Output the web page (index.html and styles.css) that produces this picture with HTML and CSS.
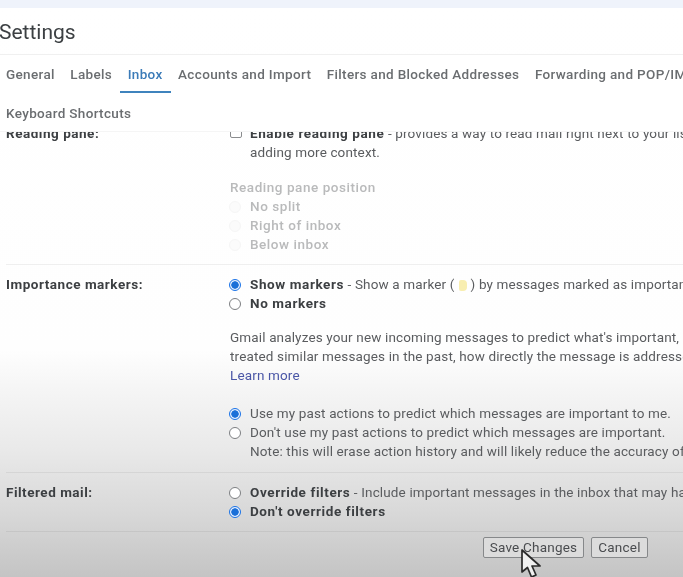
FILE: index.html
```html
<!DOCTYPE html>
<html lang="en">
<head>
<meta charset="utf-8">
<title>Settings</title>
<link rel="stylesheet" href="styles.css">
</head>
<body>
<div class="page">
  <div class="topband"></div>
  <header class="title-row"><h1 class="title">Settings</h1></header>
  <nav class="tabs">
    <div class="tab-line">
      <a class="tab">General</a>
      <a class="tab">Labels</a>
      <a class="tab active">Inbox</a>
      <a class="tab">Accounts and Import</a>
      <a class="tab">Filters and Blocked Addresses</a>
      <a class="tab">Forwarding and POP/IMAP</a>
    </div>
    <div class="tab-line second">
      <a class="tab">Keyboard Shortcuts</a>
    </div>
  </nav>
  <main class="content">
    <section class="row reading">
      <div class="label">Reading pane:</div>
      <div class="body">
        <div class="line"><span class="check"></span><span class="txt"><b>Enable reading pane</b> - provides a way to read mail right next to your list of messages,</span></div>
        <div class="line indent">adding more context.</div>
        <div class="line subhead muted">Reading pane position</div>
        <div class="line muted"><span class="radio faint"></span><b class="semi">No split</b></div>
        <div class="line muted"><span class="radio faint"></span><b class="semi">Right of inbox</b></div>
        <div class="line muted"><span class="radio faint"></span><b class="semi">Below inbox</b></div>
      </div>
    </section>
    <section class="row importance">
      <div class="label">Importance markers:</div>
      <div class="body">
        <div class="line"><span class="radio on"></span><span class="txt"><b>Show markers</b> - Show a marker (<span class="marker"></span>) by messages marked as important.</span></div>
        <div class="line"><span class="radio"></span><b>No markers</b></div>
        <div class="para first">
          <div class="line">Gmail analyzes your new incoming messages to predict what's important, considering how you've</div>
          <div class="line">treated similar messages in the past, how directly the message is addressed to you, and</div>
          <div class="line"><a class="link">Learn more</a></div>
        </div>
        <div class="para">
          <div class="line"><span class="radio on"></span><span class="txt">Use my past actions to predict which messages are important to me.</span></div>
          <div class="line"><span class="radio"></span><span class="txt">Don't use my past actions to predict which messages are important.</span></div>
          <div class="line indent">Note: this will erase action history and will likely reduce the accuracy of importance predictions.</div>
        </div>
      </div>
    </section>
    <section class="row filtered">
      <div class="label">Filtered mail:</div>
      <div class="body">
        <div class="line"><span class="radio"></span><span class="txt"><b>Override filters</b> - Include important messages in the inbox that may have been filtered out.</span></div>
        <div class="line"><span class="radio on"></span><b>Don't override filters</b></div>
      </div>
    </section>
    <div class="actions">
      <button class="btn save">Save Changes</button>
      <button class="btn cancel">Cancel</button>
    </div>
  </main>
  <svg class="cursor" width="24" height="32" viewBox="0 0 24 32" aria-hidden="true">
    <path d="M2 1 L2 23 L7.5 18.5 L11.5 28 L16 26 L12 17 L20 17 Z" fill="#f0f0f0" stroke="#2a2a2a" stroke-width="1.7" stroke-linejoin="round"/>
  </svg>
</div>
</body>
</html>
```
FILE: styles.css
```css
* { box-sizing: border-box; }
html, body { margin: 0; padding: 0; }
body {
  width: 683px;
  height: 577px;
  overflow: hidden;
  font-family: Roboto, "Liberation Sans", sans-serif;
  font-size: 13.5px;
  color: #5a5c5f;
}
.page {
  position: relative;
  width: 683px;
  height: 577px;
  overflow: hidden;
  display: flex;
  flex-direction: column;
  filter: blur(0.35px);
  background: linear-gradient(to bottom, #ffffff 0, #fefefe 350px, #f5f5f5 390px, #e9e9e9 450px, #d9d9d9 510px, #c4c4c4 577px);
}
.topband { height: 8px; background: #eff3fb; flex: none; }
.title-row {
  flex: none;
  height: 47px;
  border-bottom: 1px solid #f0f0f0;
}
.title {
  margin: 0;
  margin-left: -1px;
  font-size: 21px;
  line-height: 49px;
  font-weight: 400;
  color: #3c4043;
}
.tabs {
  flex: none;
  height: 77px;
  padding-left: 6px;
  background: #fff;
  border-bottom: 1px solid #f5f5f5;
  position: relative;
  z-index: 1;
  white-space: nowrap;
  letter-spacing: .34px;
}
.tab-line { display: flex; gap: 15.5px; height: 38px; line-height: 38px; }
.tab-line.second { line-height: 40px; }
.tab { font-weight: 500; color: #6a6d70; position: relative; }
.tab.active { color: #3b7bb8; }
.tab.active::after {
  content: "";
  position: absolute;
  left: -8px;
  right: -8px;
  bottom: 0;
  height: 2px;
  background: #3f83bd;
}
.content {
  flex: 1;
  min-height: 0;
  margin-top: -8px;
  letter-spacing: .14px;
  white-space: nowrap;
}
.row {
  display: grid;
  grid-template-columns: 224px 1fr;
  margin-left: 6px;
  border-bottom: 1px solid rgba(0,0,0,.06);
}
.label { font-weight: 700; color: #3c3f42; letter-spacing: .52px; }
.label, .line { line-height: 19.2px; height: 19.2px; }
.reading { height: 141px; }
.importance { height: 208px; padding-top: 10px; }
.filtered { height: 59px; padding-top: 10px; }
.line { display: flex; align-items: center; }
.line.indent { padding-left: 20px; }
.line b { font-weight: 700; color: #3c3f42; letter-spacing: .6px; }
.txt { white-space: pre; }
.subhead { margin-top: 15.5px; font-weight: 500; letter-spacing: .58px; }
.muted, .line .semi { color: #b9babb; font-weight: 500; letter-spacing: .55px; }
.para { margin-top: 18.5px; }
.para.first { margin-top: 14.5px; }
.link { color: #4a56a6; }
.check {
  flex: none;
  width: 12px;
  height: 12px;
  margin: -3px 8px 0 0;
  border: 1px solid #8a8c8e;
  border-radius: 2px;
}
.radio {
  flex: none;
  width: 12px;
  height: 12px;
  margin-left: -1px;
  margin-right: 9px;
  border: 1.2px solid #7d7f82;
  border-radius: 50%;
  background: #fff;
}
.radio.on {
  border-color: #1a73e8;
  background: radial-gradient(circle, #1a6fd8 0, #1a6fd8 3.4px, #e8f0fd 4px);
}
.radio.faint { border-color: #f6f6f6; background: #fbfbfb; }
.marker {
  display: inline-block;
  width: 8px;
  height: 11px;
  margin: 0 4px;
  vertical-align: -2px;
  background: #f8eeb0;
  border-radius: 2px 4px 4px 2px;
}
.actions {
  display: flex;
  gap: 7px;
  padding: 5px 0 0 483px;
}
.btn {
  height: 21px;
  padding: 0;
  font: inherit;
  letter-spacing: .22px;
  color: #4a4c4f;
  background: #dcdcdc;
  border: 1px solid #86888a;
  border-radius: 2px;
  line-height: 19px;
}
.save { width: 101px; }
.cancel { width: 57px; }
.cursor { position: absolute; left: 520px; top: 549px; }
```
